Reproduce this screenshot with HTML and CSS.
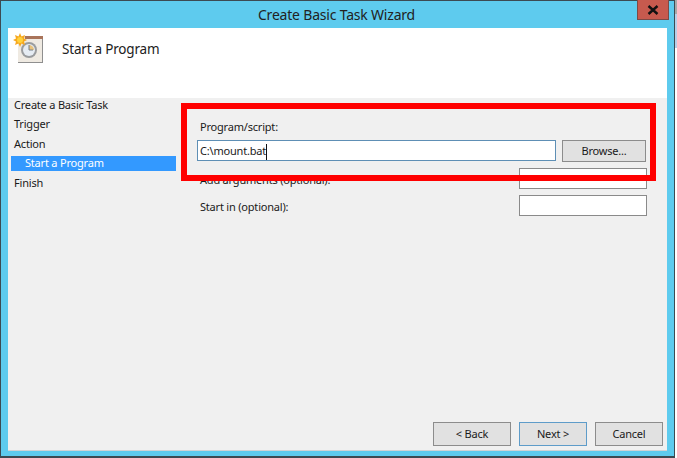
FILE: index.html
```html
<!DOCTYPE html>
<html lang="en">
<head>
  <meta charset="UTF-8" />
  <title>Create Basic Task Wizard</title>
  <link rel="stylesheet" href="styles.css">
</head>
<body>
  <div class="window">
    <div class="titlebar">
      <span class="title">Create Basic Task Wizard</span>
      <span class="close">
        <svg width="12" height="10" viewBox="0 0 12 10"><path d="M1.500 1l9 8M10.500 1l-9 8" stroke="#111" stroke-width="2.400" fill="none"/></svg>
      </span>
    </div>
    <div class="client">
      <div class="header">
        <svg class="task-icon" width="32" height="32" viewBox="0 0 32 32">
          <path d="M5 3h25v27H5z" fill="#efeae2"/>
          <path d="M12 3h18v3H12z" fill="#a9745a"/>
          <path d="M29 6h1v24H5v-1h24z" fill="#8f8f8f"/>
          <circle cx="16" cy="17" r="8" fill="#9a9c9e"/>
          <circle cx="16" cy="17" r="6" fill="#e6ecf3"/>
          <path d="M16 12v5h5a5 5 0 0 0-5-5z" fill="#e9c37d"/>
          <path d="M16 12v5h4" stroke="#77808a" fill="none"/>
          <path d="M7 0l1.500 3.500L12 2l-1 3.500 3 1.500-3 1.500 1 3.500-3.500-1.500L7 14l-1.500-3.500L2 12l1-3.500L0 7l3-1.500L2 2l3.500 1.500z" fill="#f7a81e"/>
          <circle cx="7" cy="7" r="3" fill="#ffd23c"/>
        </svg>
        <span class="header-text">Start a Program</span>
      </div>
      <div class="body">
        <div class="steps">
          <div class="step">Create a Basic Task</div>
          <div class="step">Trigger</div>
          <div class="step">Action</div>
          <div class="step step-active">Start a Program</div>
          <div class="step">Finish</div>
        </div>
        <div class="form">
          <div class="label label-first">Program/script:</div>
          <div class="row">
            <div class="input input-focus">C:\mount.bat<span class="caret"></span></div>
            <div class="btn btn-browse">Browse...</div>
          </div>
          <div class="row row-option">
            <div class="label label-option">Add arguments (optional):</div>
            <div class="input input-small"></div>
          </div>
          <div class="row row-option">
            <div class="label label-option">Start in (optional):</div>
            <div class="input input-small"></div>
          </div>
        </div>
      </div>
      <div class="footer">
        <div class="btn btn-back">&lt; Back</div>
        <div class="btn btn-next">Next &gt;</div>
        <div class="btn btn-cancel">Cancel</div>
      </div>
    </div>
    <div class="highlight"></div>
  </div>
</body>
</html>
```

FILE: styles.css
```css
html, body {
  margin: 0;
  height: 100%;
  overflow: hidden;
}

body {
  background: linear-gradient(to bottom, #a9a9a9 0, #a9a9a9 14px, #b9cfe8 14px, #b9cfe8 48px, #fff 48px);
  font-family: "Noto Sans", "Open Sans", sans-serif;
  font-size: 11px;
  letter-spacing: -0.2px;
  color: #1a1a1a;
}

.window {
  position: relative;
  box-sizing: border-box;
  width: 675px;
  height: 458px;
  padding: 0 7px 5px 7px;
  background-color: #5ecbee;
  border: 1px solid #3c4a52;
  border-bottom-width: 2px;
  display: flex;
  flex-direction: column;
}

.titlebar {
  height: 27px;
  display: flex;
  justify-content: center;
  align-items: center;
  flex-shrink: 0;
}

.title {
  font-size: 14px;
  color: #222;
  padding: 0 2px 1px 0;
}

.close {
  position: absolute;
  top: -1px;
  left: 636px;
  width: 32px;
  height: 20px;
  background-color: #c75a4e;
  border: 1px solid #7c4a46;
  border-top: 0;
  box-sizing: border-box;
  display: flex;
  align-items: center;
  justify-content: center;
}

.client {
  flex: 1;
  display: flex;
  flex-direction: column;
  background-color: #f0f0f0;
  border-bottom: 1px solid #d0d4d6;
}

.header {
  height: 70px;
  flex-shrink: 0;
  background-color: #fff;
  display: flex;
  align-items: flex-start;
  padding: 5px 0 0 5px;
  box-sizing: border-box;
}

.task-icon {
  flex-shrink: 0;
}

.header-text {
  margin: 7px 0 0 17px;
  font-size: 13.500px;
  color: #222;
}

.body {
  flex: 1;
  display: flex;
}

.steps {
  width: 168px;
}

.step {
  height: 15px;
  line-height: 14px;
  margin-bottom: 4.400px;
  padding-left: 6px;
}

.step-active {
  margin-left: 3px;
  padding-left: 14px;
  background-color: #3399ff;
  color: #fff;
}

.form {
  flex: 1;
  padding: 0 20px 0 24px;
}

.label {
  line-height: 15px;
}

.label-first {
  margin-top: 21px;
}

.label-option {
  padding-top: 1px;
}

.row {
  display: flex;
  align-items: flex-start;
}

.row-option {
  margin-top: 6px;
  align-items: center;
}

.input {
  box-sizing: border-box;
  background-color: #fff;
  border: 1px solid #8a8a8a;
  height: 21px;
}

.input-focus {
  width: 359px;
  margin: 6px 6px 0 -3px;
  border-color: #5e8fb5;
  line-height: 19px;
  padding-left: 2px;
}

.caret {
  display: inline-block;
  width: 1px;
  height: 16px;
  background-color: #111;
  vertical-align: middle;
}

.input-small {
  width: 128px;
  margin-left: auto;
}

.btn {
  box-sizing: border-box;
  background-color: #e1e1e1;
  border: 1px solid #8c8c8c;
  text-align: center;
}

.btn-browse {
  width: 84px;
  height: 22px;
  line-height: 20px;
  margin-top: 6px;
}

.footer {
  height: 28px;
  flex-shrink: 0;
  display: flex;
  padding-right: 4px;
  justify-content: flex-end;
}

.footer .btn {
  height: 24px;
  line-height: 22px;
}

.btn-back {
  width: 78px;
}

.btn-next {
  width: 68px;
  margin-left: 8px;
  border-color: #5e9cc9;
}

.btn-cancel {
  width: 68px;
  margin-left: 8px;
}

.highlight {
  position: absolute;
  left: 180px;
  top: 102px;
  width: 475px;
  height: 78px;
  box-sizing: border-box;
  border: 6px solid #ff0000;
}
```
